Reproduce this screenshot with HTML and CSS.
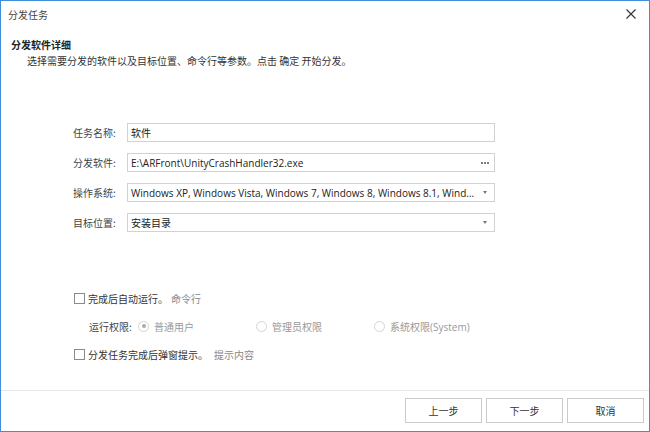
FILE: index.html
```html
<!DOCTYPE html>
<html lang="zh-CN">
<head>
<meta charset="utf-8">
<title>分发任务</title>
<link rel="stylesheet" href="styles.css">
</head>
<body>
<div class="window">
  <div class="titlebar">
    <span class="title">分发任务</span>
    <svg class="close" width="10" height="10" viewBox="0 0 10 10"><path d="M0.5 0.5 L9.5 9.5 M9.5 0.5 L0.5 9.5" stroke="#333" stroke-width="1.1" fill="none"/></svg>
  </div>
  <div class="header">
    <div class="header-title">分发软件详细</div>
    <div class="header-sub">选择需要分发的软件以及目标位置、命令行等参数。点击 确定 开始分发。</div>
  </div>
  <div class="form">
    <div class="row">
      <span class="label">任务名称:</span>
      <div class="field"><span class="value">软件</span></div>
    </div>
    <div class="row">
      <span class="label">分发软件:</span>
      <div class="field"><span class="value">E:\ARFront\UnityCrashHandler32.exe</span><span class="dots"><i></i><i></i><i></i></span></div>
    </div>
    <div class="row">
      <span class="label">操作系统:</span>
      <div class="field"><span class="value">Windows XP, Windows Vista, Windows 7, Windows 8, Windows 8.1, Wind...</span><span class="arrow"></span></div>
    </div>
    <div class="row">
      <span class="label">目标位置:</span>
      <div class="field"><span class="value">安装目录</span><span class="arrow"></span></div>
    </div>
  </div>
  <div class="options">
    <div class="opt-row">
      <span class="checkbox"></span>
      <span class="opt-text run-text">完成后自动运行。</span>
      <span class="hint">命令行</span>
    </div>
    <div class="opt-row perm">
      <span class="perm-label">运行权限:</span>
      <span class="radio-item"><span class="radio checked"></span><span class="radio-text">普通用户</span></span>
      <span class="radio-item"><span class="radio"></span><span class="radio-text">管理员权限</span></span>
      <span class="radio-item"><span class="radio"></span><span class="radio-text">系统权限(System)</span></span>
    </div>
    <div class="opt-row">
      <span class="checkbox"></span>
      <span class="opt-text notify-text">分发任务完成后弹窗提示。</span>
      <span class="hint">提示内容</span>
    </div>
  </div>
  <div class="spacer"></div>
  <div class="footer">
    <button class="btn">上一步</button>
    <button class="btn">下一步</button>
    <button class="btn">取消</button>
  </div>
</div>
</body>
</html>
```

FILE: styles.css
```css
html, body {
  margin: 0;
  padding: 0;
  background: #fff;
}

.window {
  width: 650px;
  height: 432px;
  box-sizing: border-box;
  border: 1px solid #3f8fdc;
  display: flex;
  flex-direction: column;
  font-family: "Open Sans", "Noto Sans CJK SC", sans-serif;
  font-size: 10px;
  color: #333;
  background: #fff;
}

.titlebar {
  height: 26px;
  display: flex;
  align-items: center;
  justify-content: space-between;
  padding: 0 13px 0 7px;
}

.title {
  font-family: "Noto Sans CJK SC", sans-serif;
  font-size: 10px;
  color: #444;
}

.close {
  display: block;
}

.header {
  padding: 10px 0 0 10px;
}

.header-title {
  font-family: "Noto Sans CJK SC", sans-serif;
  font-weight: bold;
  line-height: 16px;
  color: #222;
}

.header-sub {
  font-family: "Noto Sans CJK SC", sans-serif;
  line-height: 16px;
  padding-left: 16px;
  color: #333;
}

.form {
  margin-top: 54px;
  padding-left: 72px;
  display: flex;
  flex-direction: column;
  gap: 11px;
}

.row {
  display: flex;
  align-items: center;
  height: 19px;
}

.label {
  width: 54px;
  font-family: "Noto Sans CJK SC", sans-serif;
  color: #444;
}

.field {
  width: 368px;
  height: 19px;
  box-sizing: border-box;
  border: 1px solid #d2d2d2;
  display: flex;
  align-items: center;
  padding: 0 6px 0 3px;
}

.value {
  flex: 1;
  white-space: nowrap;
  overflow: hidden;
  color: #222;
}

.dots {
  display: flex;
  gap: 1px;
  margin-right: -1px;
}

.dots i {
  width: 2px;
  height: 2px;
  border-radius: 50%;
  background: #555;
}

.arrow {
  width: 0;
  height: 0;
  border-left: 2.5px solid transparent;
  border-right: 2.5px solid transparent;
  border-top: 3px solid #777;
  margin-right: 1px;
}

.options {
  margin-top: 58px;
  padding-left: 73px;
  display: flex;
  flex-direction: column;
  gap: 12px;
}

.opt-row {
  display: flex;
  align-items: center;
  height: 16px;
  font-family: "Noto Sans CJK SC", sans-serif;
}

.checkbox {
  width: 11px;
  height: 11px;
  box-sizing: border-box;
  border: 1px solid #8a8a8a;
  margin-right: 3px;
  background: #fff;
}

.opt-text {
  color: #333;
}

.run-text {
  width: 83px;
}

.notify-text {
  width: 126px;
}

.hint {
  color: #888;
}

.perm {
  padding-left: 15px;
}

.perm-label {
  width: 49px;
  color: #444;
}

.radio-item {
  display: flex;
  align-items: center;
  width: 118px;
}

.radio {
  width: 11px;
  height: 11px;
  box-sizing: border-box;
  border: 1px solid #d4d4d4;
  border-radius: 50%;
  margin-right: 5px;
  display: flex;
  align-items: center;
  justify-content: center;
}

.radio.checked::after {
  content: "";
  width: 4px;
  height: 4px;
  border-radius: 50%;
  background: #aaa;
}

.radio-text {
  color: #999;
  font-family: "Open Sans", "Noto Sans CJK SC", sans-serif;
}

.spacer {
  flex: 1;
}

.footer {
  border-top: 1px solid #e6e6e6;
  padding: 7px 5px 8px 0;
  display: flex;
  justify-content: flex-end;
  gap: 4px;
}

.btn {
  width: 77px;
  height: 25px;
  box-sizing: border-box;
  border: 1px solid #cacaca;
  background: #fff;
  font-family: "Noto Sans CJK SC", sans-serif;
  font-size: 10px;
  color: #333;
  padding: 0;
  border-radius: 0;
}
```
